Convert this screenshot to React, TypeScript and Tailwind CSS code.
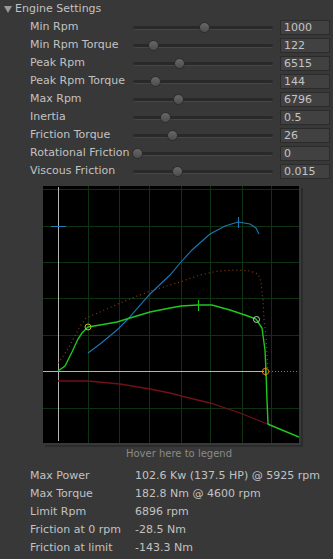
import React from "react";

const settings = [
  { label: "Min Rpm", value: "1000", thumb: 204 },
  { label: "Min Rpm Torque", value: "122", thumb: 153 },
  { label: "Peak Rpm", value: "6515", thumb: 179 },
  { label: "Peak Rpm Torque", value: "144", thumb: 155 },
  { label: "Max Rpm", value: "6796", thumb: 178 },
  { label: "Inertia", value: "0.5", thumb: 165 },
  { label: "Friction Torque", value: "26", thumb: 172 },
  { label: "Rotational Friction", value: "0", thumb: 137 },
  { label: "Viscous Friction", value: "0.015", thumb: 177 },
];

const stats = [
  ["Max Power", "102.6 Kw (137.5 HP) @ 5925 rpm"],
  ["Max Torque", "182.8 Nm @ 4600 rpm"],
  ["Limit Rpm", "6896 rpm"],
  ["Friction at 0 rpm", "-28.5 Nm"],
  ["Friction at limit", "-143.3 Nm"],
];

const SLIDER_LEFT = 133;

const pts = (list: number[][]) => list.map((p) => p.join(",")).join(" ");

const power = [
  [88, 353], [100, 344], [117, 330], [127, 320], [150, 294], [170, 275], [181, 262],
  [192, 250], [210, 234], [225, 226], [238, 222], [250, 224], [256, 228], [259, 234],
];

const torque = [
  [58, 371], [65, 366], [72, 352], [78, 339], [82, 333], [88, 327], [100, 325],
  [117, 322], [130, 318], [150, 312], [170, 308], [181, 306], [198, 305], [212, 305],
  [230, 310], [245, 315], [256, 319], [262, 328], [265, 350], [266, 371], [267, 400],
  [268, 424], [270, 425], [299, 437],
];

const maxTorque = [
  [58, 363], [64, 355], [70, 345], [76, 334], [80, 326], [86, 318], [100, 312],
  [120, 303], [150, 291], [160, 288], [180, 282], [200, 275], [218, 271], [235, 270],
  [250, 271], [258, 274], [261, 282], [263, 300], [264, 320], [266, 335], [267, 355], [268, 371],
];

const friction = [
  [58, 381], [88, 381], [120, 384], [150, 389], [170, 393], [181, 396], [210, 403],
  [240, 413], [270, 425],
];

function Chart() {
  const vx = [88, 119, 149, 181, 210, 242, 271];
  const hy = [189, 226, 262, 298, 335, 408];
  return (
    <svg width="256" height="257" viewBox="43 186 256 257" className="block">
      <rect x="43" y="186" width="256" height="257" fill="#000" />
      {vx.map((x) => (
        <line key={x} x1={x + 0.5} y1={186} x2={x + 0.5} y2={443} stroke="#0f3310" />
      ))}
      {hy.map((y) => (
        <line key={y} x1={43} y1={y + 0.5} x2={299} y2={y + 0.5} stroke="#0f3310" />
      ))}
      <line x1="58.5" y1="187" x2="58.5" y2="441" stroke="#b4b4b4" />
      <line x1="43" y1="371.5" x2="264" y2="371.5" stroke="#b4b4b4" />
      <line x1="269" y1="371.5" x2="299" y2="371.5" stroke="#b8661a" strokeDasharray="1 2" />
      <line x1="51" y1="226.5" x2="66" y2="226.5" stroke="#1e7ab8" />
      <polyline points={pts(friction)} fill="none" stroke="#701018" strokeWidth="1.3" />
      <polyline points={pts(maxTorque)} fill="none" stroke="#8a3c0c" strokeWidth="1.2" strokeDasharray="1 3" />
      <polyline points={pts(power)} fill="none" stroke="#1a78b4" strokeWidth="1.1" />
      <line x1="238.5" y1="217" x2="238.5" y2="228" stroke="#1a78b4" />
      <polyline points={pts(torque)} fill="none" stroke="#1ec81e" strokeWidth="1.4" />
      <line x1="198.5" y1="300" x2="198.5" y2="311" stroke="#1ec81e" />
      <circle cx="88" cy="327" r="3" fill="none" stroke="#c8bc28" />
      <circle cx="256.5" cy="319.5" r="3" fill="none" stroke="#c8c8c8" />
      <circle cx="265.5" cy="371.5" r="3.2" fill="none" stroke="#d4801a" />
      <line x1="265.5" y1="367" x2="265.5" y2="376" stroke="#d4801a" />
    </svg>
  );
}

export default function App() {
  return (
    <div
      className="w-[333px] h-[559px] bg-[#383838] text-[#c2c2c2] text-[11px] overflow-hidden"
      style={{ fontFamily: '"DejaVu Sans", sans-serif' }}
    >
      <div className="h-[18px] flex items-center">
        <svg width="8" height="7" viewBox="0 0 8 7" className="ml-[4px] mr-[3px]">
          <polygon points="0,0 8,0 4,7" fill="#9a9a9a" />
        </svg>
        <span className="leading-[18px]">Engine Settings</span>
      </div>

      {settings.map((s) => (
        <div key={s.label} className="h-[18px] flex items-center">
          <div className="w-[133px] pl-[30px] whitespace-nowrap leading-[18px]">{s.label}</div>
          <div className="relative w-[140px] h-[18px]">
            <div className="absolute left-0 right-0 top-[8px] h-[4px] rounded-full bg-[#292929] border-b border-[#464646]" />
            <div
              className="absolute top-[4px] w-[11px] h-[11px] rounded-full bg-gradient-to-b from-[#676767] to-[#4d4d4d] border border-[#2c2c2c]"
              style={{ left: s.thumb - SLIDER_LEFT - 5.5 }}
            />
          </div>
          <div className="ml-[7px] w-[50px] h-[15px] bg-[#414141] border border-[#2b2b2b] pl-[3px] leading-[13px] text-[#c4c4c4]">
            {s.value}
          </div>
        </div>
      ))}

      <div className="mt-[6px] ml-[43px] w-[258px] h-[259px] shadow-[2px_2px_0_#2c2c2c]">
        <Chart />
      </div>

      <div className="h-[18px] pl-[30px] pr-[5px] text-center text-[10px] leading-[18px] text-[#8a8a8a]">
        Hover here to legend
      </div>

      <div className="mt-[4px]">
        {stats.map(([k, v]) => (
          <div key={k} className="h-[18px] flex items-center leading-[18px]">
            <div className="w-[135px] pl-[30px] whitespace-nowrap">{k}</div>
            <div className="whitespace-nowrap">{v}</div>
          </div>
        ))}
      </div>
    </div>
  );
}
